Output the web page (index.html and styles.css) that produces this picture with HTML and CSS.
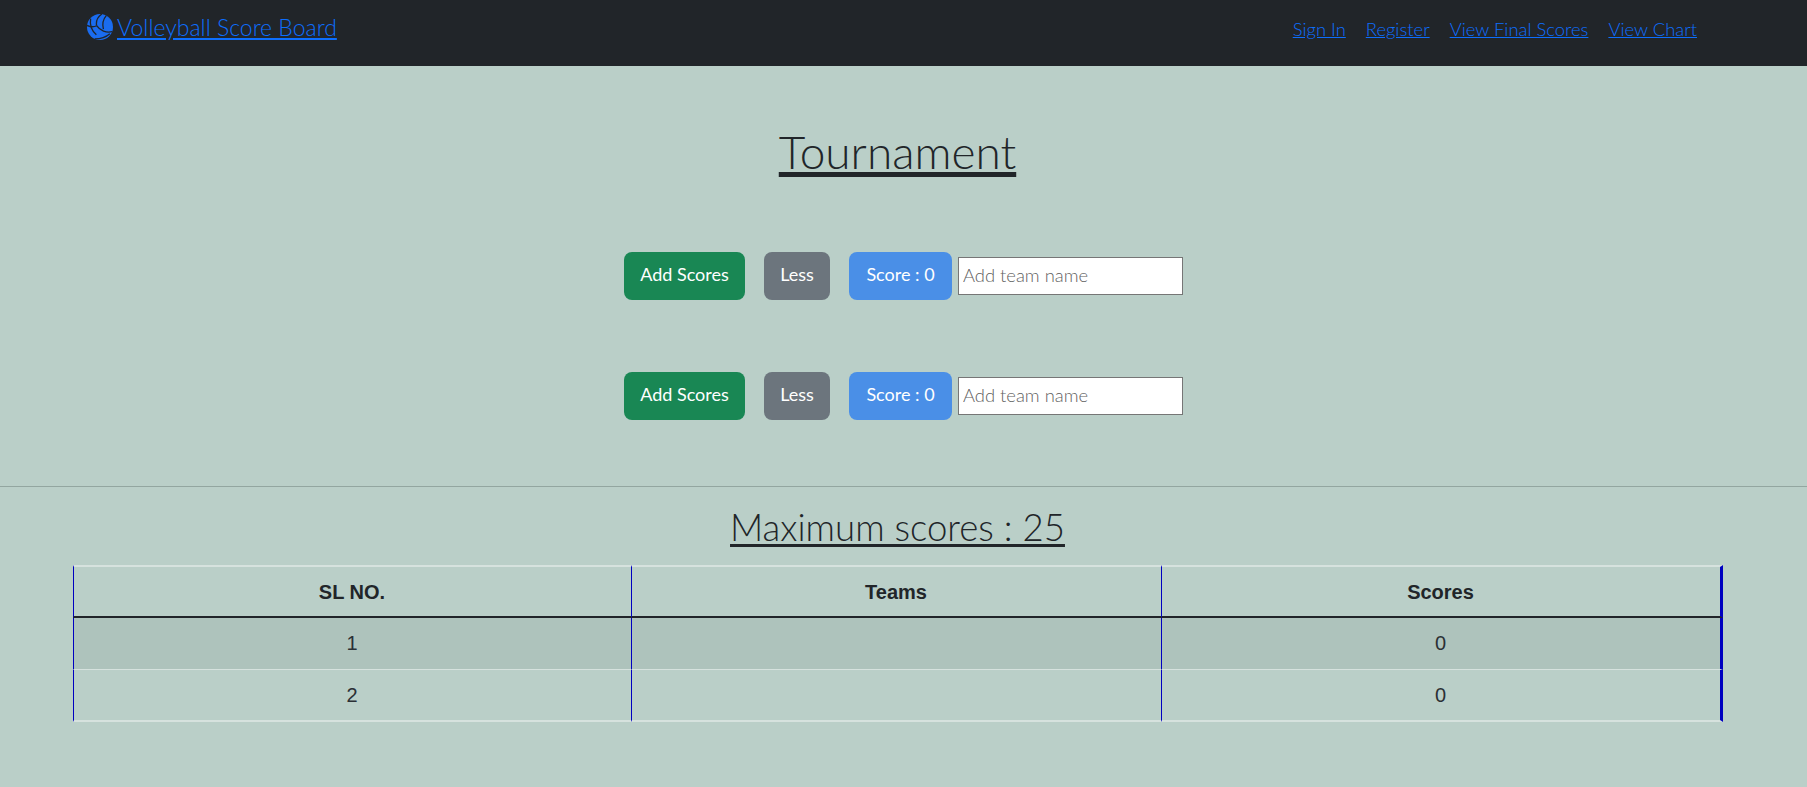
FILE: index.html
```html
<!DOCTYPE html>
<html lang="en">
<head>
  <meta charset="UTF-8">
  <title>Volleyball Score Board</title>
  <link rel="stylesheet" href="styles.css">
</head>
<body>
  <nav class="topbar">
    <a class="brand" href="#">
      <svg class="brand-icon" viewBox="0 0 100 100" aria-hidden="true">
        <circle cx="50" cy="50" r="50" fill="#1a6cf0"/>
        <g fill="none" stroke="#212529" stroke-width="5">
          <path d="M57 0C40 12 34 28 37 45"/>
          <path d="M74 6C62 20 58 38 63 58"/>
          <path d="M0 44C14 50 28 50 37 45"/>
          <path d="M37 45C50 64 74 74 97 68"/>
          <path d="M30 96C50 96 72 90 88 76"/>
          <path d="M14 18C10 40 18 64 36 80"/>
        </g>
      </svg>
      <span>Volleyball Score Board</span>
    </a>
    <div class="links">
      <a href="#">Sign In</a>
      <a href="#">Register</a>
      <a href="#">View Final Scores</a>
      <a href="#">View Chart</a>
    </div>
  </nav>

  <main class="page">
    <h1>Tournament</h1>

    <div class="team-row">
      <button class="btn btn-green">Add Scores</button>
      <button class="btn btn-grey">Less</button>
      <button class="btn btn-blue">Score : 0</button>
      <input class="team-name" type="text" placeholder="Add team name">
    </div>
    <div class="team-row">
      <button class="btn btn-green">Add Scores</button>
      <button class="btn btn-grey">Less</button>
      <button class="btn btn-blue">Score : 0</button>
      <input class="team-name" type="text" placeholder="Add team name">
    </div>

    <hr>

    <h2>Maximum scores : 25</h2>

    <table class="scores">
      <colgroup>
        <col class="col-sl">
        <col class="col-team">
        <col class="col-score">
      </colgroup>
      <thead>
        <tr><th>SL NO.</th><th>Teams</th><th>Scores</th></tr>
      </thead>
      <tbody>
        <tr class="odd"><td>1</td><td></td><td>0</td></tr>
        <tr><td>2</td><td></td><td>0</td></tr>
      </tbody>
    </table>
  </main>
</body>
</html>
```

FILE: styles.css
```css
* {
  box-sizing: border-box;
}
body {
  margin: 0;
  background: #bacfc8;
  color: #212529;
  font-family: Lato, "Open Sans", sans-serif;
  font-weight: 300;
  overflow: hidden;
}
a {
  color: #0d6efd;
}
.topbar {
  height: 66px;
  background: #212529;
  display: flex;
  justify-content: space-between;
  align-items: flex-start;
  padding: 11px 110px 0 87px;
}
.brand {
  display: flex;
  align-items: center;
  gap: 4px;
  font-size: 23px;
  line-height: 32px;
}
.brand-icon {
  width: 26px;
  height: 26px;
}
.links {
  display: flex;
  gap: 20px;
  font-size: 18.4px;
  line-height: 36px;
}
.page {
  padding: 0 12px 0 0;
  text-align: center;
}
h1 {
  margin: 56px 0 0;
  font-size: 46px;
  line-height: 60px;
  font-weight: 300;
  text-decoration: underline;
  text-decoration-thickness: 5px;
  text-underline-offset: 3px;
}
.team-row {
  display: flex;
  justify-content: center;
  align-items: center;
  margin: 70px -12px 0 0;
  height: 48px;
}
.team-row + .team-row {
  margin-top: 72px;
}
.btn {
  height: 48px;
  border: 1px solid transparent;
  border-radius: 8px;
  padding: 0 0 4px;
  margin-right: 19px;
  color: #fff;
  font: inherit;
  font-size: 18px;
  font-weight: 400;
  white-space: nowrap;
}
.btn-green {
  background: #198754;
  width: 121px;
}
.btn-grey {
  background: #6c757d;
  width: 66px;
}
.btn-blue {
  background: #4a8fe7;
  width: 103px;
  margin-right: 6px;
}
.team-name {
  width: 225px;
  height: 38px;
  border: 1px solid #767676;
  background: #fff;
  padding: 0 4px 3px;
  font: inherit;
  font-size: 18.4px;
}
.team-name::placeholder {
  color: #5f5f5f;
}
hr {
  margin: 66px -12px 0 0;
  border: 0;
  border-top: 1px solid #93a6a0;
}
h2 {
  margin: 18px 0 0;
  font-size: 36.6px;
  line-height: 44px;
  font-weight: 300;
  text-decoration: underline;
  text-decoration-thickness: 3px;
  text-underline-offset: 3px;
}
.scores {
  width: 1650px;
  margin: 16px auto 0;
  border-collapse: separate;
  border-spacing: 0;
  table-layout: fixed;
  font-family: "Liberation Sans", Arial, sans-serif;
  font-size: 20px;
  font-weight: 400;
  color: #2b3035;
}
.col-sl {
  width: 558px;
}
.col-team {
  width: 530px;
}
.col-score {
  width: 562px;
}
.scores th,
.scores td {
  height: 52px;
  padding: 0;
  border-left: 1px solid #0000c0;
  border-bottom: 1px solid #d6e2de;
}
.scores th {
  font-weight: 700;
  color: #212529;
  height: 53px;
  padding-top: 2px;
  border-top: 2px solid #d6e2de;
  border-bottom: 2px solid #212529;
}
.scores th:last-child,
.scores td:last-child {
  border-right: 3px solid #0000c0;
}
.scores tbody tr:last-child td {
  border-bottom-width: 2px;
}
.odd {
  background: #aec3bc;
}
```
